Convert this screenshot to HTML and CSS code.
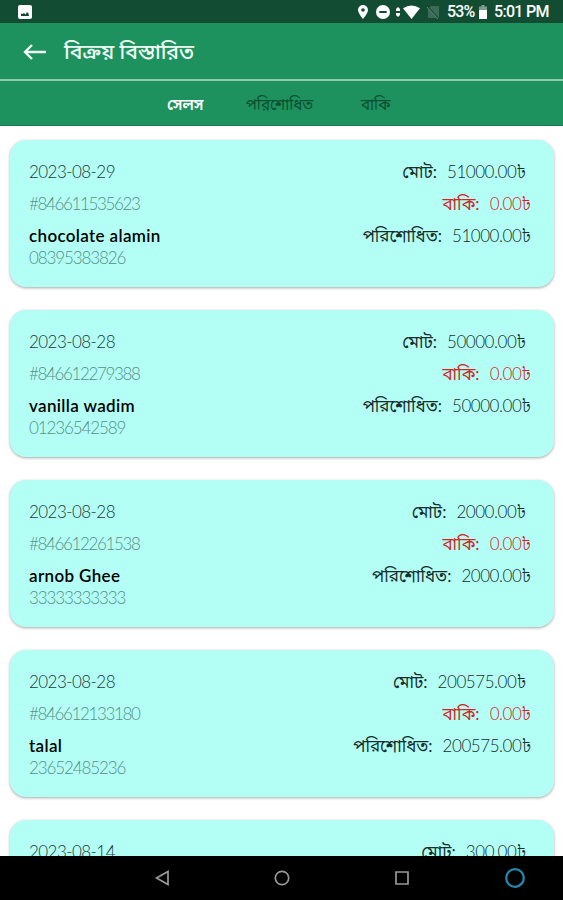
FILE: index.html
```html
<!DOCTYPE html>
<html lang="bn">
<head>
  <meta charset="utf-8">
  <title>বিক্রয় বিস্তারিত</title>
  <link rel="stylesheet" href="styles.css">
</head>
<body>
  <div class="status-bar">
    <svg class="photo-icon" viewBox="0 0 14 14"><rect width="14" height="14" rx="2" fill="#fff"/><path d="M3 11V8.500l1.500.5L6 8l1.500 1.500L9 7l1.500 1.500.5 2.500z" fill="#124d33"/></svg>
    <div class="status-icons">
      <svg class="pin-icon" viewBox="0 0 10 14"><path d="M5 0a5 5 0 0 0-5 5c0 3 5 9 5 9s5-6 5-9a5 5 0 0 0-5-5zm0 3.200a1.800 1.800 0 1 1 0 3.600 1.800 1.800 0 0 1 0-3.600z" fill="#fff" fill-rule="evenodd"/></svg>
      <svg class="dnd-icon" viewBox="0 0 14 14"><circle cx="7" cy="7" r="7" fill="#fff"/><path d="M3.300 7h7.400" stroke="#124d33" stroke-width="2"/></svg>
      <svg class="data-icon" viewBox="0 0 4 10"><path d="M2 0l2 2v2H0V2zM2 10l2-2V6H0v2z" fill="#fff"/></svg>
      <svg class="wifi-icon" viewBox="0 0 17 14"><path d="M0 3.300Q8.500-2.500 17 3.300L8.500 14z" fill="#fff"/></svg>
      <svg class="sim-icon" viewBox="0 0 12 14"><path d="M4 1h8v12H1V4z" fill="#3c6c57"/><path d="M0 1l12 13" stroke="#124d33" stroke-width="1.500"/><path d="M0 2l11 12" stroke="#5d8775"/></svg>
      <span class="percent">53%</span>
      <svg class="battery-icon" viewBox="0 0 8 14"><path d="M2.500 0h3v1.500H8V6H0V1.500h2.500z" fill="#7c9c8e"/><path d="M0 5h8v9H0z" fill="#fff"/></svg>
      <span class="clock">5:01 PM</span>
    </div>
  </div>

  <header class="app-bar">
    <svg class="back-icon" viewBox="0 0 24 16"><path d="M23 8H2M9 1L2 8l7 7" fill="none" stroke="#eefff5" stroke-width="2.400"/></svg>
    <h1>বিক্রয় বিস্তারিত</h1>
  </header>

  <nav class="tabs">
    <span class="tab active">সেলস</span>
    <span class="tab paid-tab">পরিশোধিত</span>
    <span class="tab">বাকি</span>
  </nav>

  <main class="sales">
    <section class="card">
      <div class="info">
        <p class="date">2023-08-29</p>
        <p class="invoice">#846611535623</p>
        <p class="name">chocolate alamin</p>
        <p class="phone">08395383826</p>
      </div>
      <div class="amounts">
        <p class="total"><span>মোট:</span><b>51000.00৳</b></p>
        <p class="due"><span>বাকি:</span><b>0.00৳</b></p>
        <p class="paid"><span>পরিশোধিত:</span><b>51000.00৳</b></p>
      </div>
    </section>

    <section class="card">
      <div class="info">
        <p class="date">2023-08-28</p>
        <p class="invoice">#846612279388</p>
        <p class="name">vanilla wadim</p>
        <p class="phone">01236542589</p>
      </div>
      <div class="amounts">
        <p class="total"><span>মোট:</span><b>50000.00৳</b></p>
        <p class="due"><span>বাকি:</span><b>0.00৳</b></p>
        <p class="paid"><span>পরিশোধিত:</span><b>50000.00৳</b></p>
      </div>
    </section>

    <section class="card">
      <div class="info">
        <p class="date">2023-08-28</p>
        <p class="invoice">#846612261538</p>
        <p class="name">arnob Ghee</p>
        <p class="phone">33333333333</p>
      </div>
      <div class="amounts">
        <p class="total"><span>মোট:</span><b>2000.00৳</b></p>
        <p class="due"><span>বাকি:</span><b>0.00৳</b></p>
        <p class="paid"><span>পরিশোধিত:</span><b>2000.00৳</b></p>
      </div>
    </section>

    <section class="card">
      <div class="info">
        <p class="date">2023-08-28</p>
        <p class="invoice">#846612133180</p>
        <p class="name">talal</p>
        <p class="phone">23652485236</p>
      </div>
      <div class="amounts">
        <p class="total"><span>মোট:</span><b>200575.00৳</b></p>
        <p class="due"><span>বাকি:</span><b>0.00৳</b></p>
        <p class="paid"><span>পরিশোধিত:</span><b>200575.00৳</b></p>
      </div>
    </section>

    <section class="card">
      <div class="info">
        <p class="date">2023-08-14</p>
      </div>
      <div class="amounts">
        <p class="total"><span>মোট:</span><b>300.00৳</b></p>
      </div>
    </section>
  </main>

  <footer class="nav-bar">
    <svg viewBox="0 0 22 22"><path d="M17 4.500v13L5.500 11z" fill="none" stroke="#999" stroke-width="1.700"/></svg>
    <svg viewBox="0 0 22 22"><circle cx="11" cy="11" r="6.700" fill="none" stroke="#999" stroke-width="1.700"/></svg>
    <svg viewBox="0 0 22 22"><path d="M5 5h12v12H5z" fill="none" stroke="#999" stroke-width="1.700"/></svg>
    <svg viewBox="0 0 22 22"><circle cx="11" cy="11" r="8.800" fill="none" stroke="#2487ac" stroke-width="2.300"/><path d="M10.500 21v-2q4-.3 6-3.500l1 1.500-3 3z" fill="#2487ac"/></svg>
  </footer>
</body>
</html>
```

FILE: styles.css
```css
* {
  box-sizing: border-box;
}

body {
  margin: 0;
  height: 900px;
  display: flex;
  flex-direction: column;
  overflow: hidden;
  background: #fff;
  font-family: Lato, "Noto Sans Bengali", "Noto Sans", sans-serif;
}

h1, p {
  margin: 0;
  white-space: nowrap;
}

svg {
  display: block;
  flex: none;
}

.status-bar {
  height: 23px;
  flex: none;
  display: flex;
  align-items: center;
  justify-content: space-between;
  padding: 1px 14px 0 18px;
  background: #124d33;
  color: #fff;
  font: 500 16px/22px Roboto, sans-serif;
}

.photo-icon {
  width: 14px;
  height: 14px;
}

.status-icons {
  display: flex;
  align-items: center;
}

.pin-icon { width: 10px; height: 14px; margin-right: 8px; }
.dnd-icon { width: 14px; height: 14px; margin-right: 6px; }
.data-icon { width: 4px; height: 10px; margin-right: 3px; }
.wifi-icon { width: 17px; height: 14px; margin-right: 7px; }
.sim-icon { width: 12px; height: 14px; margin-right: 8px; }
.battery-icon { width: 8px; height: 14px; margin-right: 7px; }

.percent {
  width: 32px;
  letter-spacing: -0.9px;
}

.clock {
  width: 55px;
  white-space: nowrap;
  letter-spacing: -0.7px;
}

.app-bar {
  height: 58px;
  flex: none;
  display: flex;
  align-items: center;
  padding: 2px 0 0 23px;
  background: #1d915e;
  border-bottom: 2px solid #93cbb0;
}

.back-icon {
  width: 24px;
  height: 16px;
  margin-right: 17px;
}

h1 {
  padding-top: 2px;
  color: #eefff5;
  font-size: 21.2px;
  font-weight: 500;
}

.tabs {
  height: 45px;
  flex: none;
  display: flex;
  align-items: center;
  padding: 4px 0 0 167px;
  background: #1d915e;
  border-bottom: 1px solid #127b4b;
  font-size: 15.2px;
  color: #0b4e30;
}

.tab {
  white-space: nowrap;
}

.active {
  width: 79px;
  color: #fff;
  font-weight: 600;
}

.paid-tab {
  width: 115px;
}

.sales {
  flex: 1;
  overflow: hidden;
  padding: 14px 9px 0 10px;
}

.card {
  height: 147px;
  display: flex;
  justify-content: space-between;
  margin-bottom: 23px;
  padding: 16px 23px 0 19px;
  border-radius: 16px;
  background: #b4fff5;
  box-shadow: 0 1px 3px rgba(0, 0, 0, 0.35);
}

.card p {
  height: 32px;
  line-height: 32px;
  font-size: 17px;
  font-weight: 300;
}

.info .date {
  color: #18393a;
  letter-spacing: -0.55px;
}

.info .invoice {
  color: #568f88;
  letter-spacing: -1.35px;
}

.card .name {
  height: 29px;
  color: #000;
  font-weight: 600;
  letter-spacing: 0.35px;
}

.card .phone {
  height: 18px;
  line-height: 18px;
  color: #568f88;
  letter-spacing: -1.1px;
}

.amounts p {
  display: flex;
  justify-content: flex-end;
  gap: 10px;
  color: #152e2c;
}

.amounts span {
  font-weight: 400;
}

.amounts b {
  font-weight: 300;
  letter-spacing: -0.45px;
}

.amounts .total {
  padding-right: 5px;
}

.amounts .due {
  color: #d32424;
}

.nav-bar {
  height: 44px;
  flex: none;
  display: grid;
  grid-template-columns: 120px 120px 113px 22px;
  align-items: center;
  padding-left: 151px;
  background: #000;
}

.nav-bar svg {
  width: 22px;
  height: 22px;
}
```
